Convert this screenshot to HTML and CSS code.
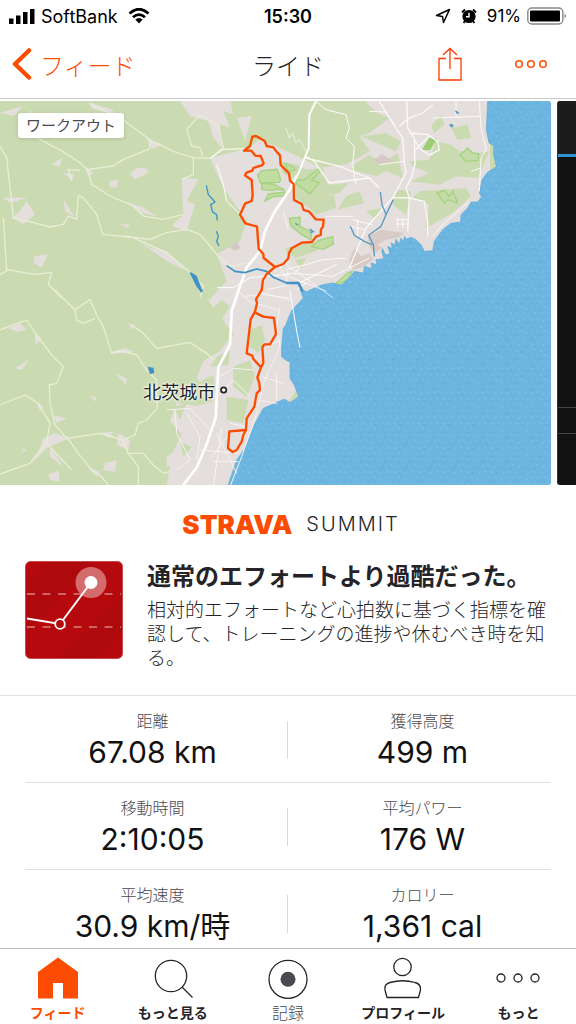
FILE: index.html
```html
<!DOCTYPE html>
<html lang="ja">
<head>
    <meta charset="UTF-8">
    <meta name="viewport" content="width=device-width, initial-scale=1.0">
    <title>ライド</title>
    <link rel="stylesheet" href="styles.css">
</head>
<body>
    <div class="status-bar">
        <div class="status-left">
            <svg width="26" height="16" viewBox="0 0 26 16"><path d="M0 10.500h4.500V16H0zM7 7.500h4.500V16H7zM14 4h4.500v12H14zM21 1h4.500v15H21z"/></svg>
            <span class="carrier">SoftBank</span>
            <svg class="wifi" width="22" height="16" viewBox="0 0 22 16"><path d="M1.500 5.500Q11-3 20.500 5.500M5 9.300Q11 4 17 9.300" fill="none" stroke="#000" stroke-width="2.800"/><path d="M7.300 11.600Q11 8.500 14.700 11.600L11 15.500z"/></svg>
        </div>
        <time class="clock">15:30</time>
        <div class="status-right">
            <svg width="16" height="16" viewBox="0 0 16 16"><path d="M1.500 7.500L14.500 1.500L8.500 14.500L7.500 8.500z" fill="none" stroke="#000" stroke-width="1.500" stroke-linejoin="round"/></svg>
            <svg class="alarm" width="16" height="16" viewBox="0 0 16 16"><circle cx="8" cy="8.500" r="6.600"/><path d="M1 4.500L4 1.500M15 4.500L12 1.500M4 13l-1.500 2M12 13l1.500 2" stroke="#000" stroke-width="1.800"/><path d="M8 4.800v4H5" fill="none" stroke="#fff" stroke-width="1.400"/></svg>
            <span>91%</span>
            <svg width="40" height="18" viewBox="0 0 40 18"><rect x=".8" y="1" width="35" height="16" rx="4" fill="none" stroke="#888" stroke-width="1.400"/><rect x="3" y="3.500" width="30" height="11" rx="1"/><path d="M37.500 6.500q3 2.500 0 5z" fill="#888"/></svg>
        </div>
    </div>

    <header class="nav-bar">
        <a class="back" href="#feed">
            <svg width="20" height="32" viewBox="0 0 20 32"><path d="M17 2.500L3 16L17 29.500" fill="none" stroke="#fc4c02" stroke-width="4.500" stroke-linecap="round" stroke-linejoin="round"/></svg>
            フィード
        </a>
        <h1>ライド</h1>
        <div class="nav-actions">
            <button type="button" aria-label="共有">
                <svg width="24" height="34" viewBox="0 0 24 34"><path d="M8 11.500H1V33H23V11.500H16M12 22V2M5 8L12 1.500L19 8" fill="none" stroke="#fc3a02" stroke-width="1.300"/></svg>
            </button>
            <button type="button" aria-label="メニュー">
                <svg width="34" height="10" viewBox="0 0 34 10" fill="none" stroke="#fc4c02" stroke-width="1.500"><circle cx="5" cy="5" r="3.300"/><circle cx="17" cy="5" r="3.300"/><circle cx="29" cy="5" r="3.300"/></svg>
            </button>
        </div>
    </header>

    <main>
        <section class="carousel">
            <div class="map">
                <svg class="map-art" viewBox="0 0 1653 1152">
                    <defs>
                        <pattern id="waves" width="73" height="73" patternUnits="userSpaceOnUse">
                            <rect width="73" height="73" fill="#6cb5e0"/>
                            <path d="M5 8l6 2M20 4l5 3M38 12l7-2M58 6l4 4M12 24l5 3M31 28l8 1M50 23l5 4M66 30l5-2M4 42l6 3M24 45l4-3M43 40l7 4M60 48l6 1M14 60l7 2M35 64l5-3M53 60l6 3M67 68l4-3" stroke="#85c7ec" stroke-width="2.500"/>
                            <path d="M14 15h8M46 32h9M27 54h10M4 69h6M62 16h6" stroke="#60acd9" stroke-width="3"/>
                        </pattern>
                    </defs>
                    <rect width="1653" height="1152" fill="#cbdbb1"/>

                    <!-- open land -->
                    <g fill="#e4dedc">
                        <path d="M1100 0L1470 0V550L1020 640L900 850L700 1152H500L520 1050L545 1000L510 960L530 905L590 915L640 900L590 830L610 780L660 750L700 700L625 600L680 540L650 460L720 420L740 360L670 260L630 170L745 142L780 115L880 160L960 200L1040 190L1110 150L1075 100z"/>
                        <path d="M540 0L690 0L700 40L670 30L690 80L660 70L665 140L640 110L625 60L570 45zM710 50L755 45L735 120z"/>
                        <path d="M390 220L410 200L440 202L445 215L405 235zM330 240L355 235L350 260L328 258zM155 190L185 170L180 195L195 200zM190 215L220 220L218 240zM190 295L225 350L195 330zM60 330L80 300L105 340L70 370L35 350zM105 465L145 460L125 500L100 485zM545 230L595 235L560 300L585 310L560 390L515 375L550 340zM255 195L280 215L265 230zM375 300L430 320L470 345L420 335zM440 115L490 130L455 145zM400 410L450 440L500 450L560 510L500 480zM265 3L335 25L345 40L280 25zM0 35L70 15L40 45zM360 370h30l-10 12zM10 290L85 290L30 305z"/>
                    </g>
                    <g transform="translate(0 567)" fill="#e4dedc">
                        <path d="M25 115L60 100L80 120L50 125zM45 235L90 205L65 240zM105 130L125 150L105 165zM345 250L380 265L378 285zM270 315L290 325L285 335zM160 375L200 385L170 400zM130 445L165 430L205 445L140 475L95 520L120 475zM150 470L190 530L150 500zM145 555L175 540L180 575L150 570zM355 430L390 450L385 480L350 465zM300 430l40-6-10 20zM265 535L300 545L290 560zM315 520L350 510L345 545L310 540zM385 100L405 105L395 120zM335 185L375 175L400 185L345 192zM70 475l10 5-15 10zM110 335L130 350L120 365zM500 500L530 480L560 530L500 530z"/>
                    </g>

                    <!-- woodland patches -->
                    <g transform="translate(858 -9)" fill="#cbdbb1">
                        <path d="M75 40L115 20L150 15L180 60L170 130L130 110L100 135L70 120zM195 35L235 10L275 45L310 60L250 105L190 125zM200 155L240 145L225 175L200 165zM210 195L250 170L290 195L335 165L350 240L300 220L270 235L195 215zM225 115L300 105L345 130L330 160zM435 85L465 50L475 80L445 105zM495 90L545 80L555 120L515 125zM450 130L495 140L520 160L580 165L610 160L575 240L510 235L460 260L375 250L430 225L380 205L370 190L430 185zM330 275L375 280L360 350L320 320zM400 280L540 270L555 295L500 345L420 390L430 320L380 300zM80 300L145 290L150 330L90 350L60 320zM180 295L220 280L235 315L155 335zM240 340L285 330L270 365zM0 450L80 430L100 455L30 480L0 465zM25 485L60 480L45 510z"/>
                        <path d="M-20 190L35 200L60 215L110 210L125 260L190 255L160 285L130 290L100 320L60 325L30 300L25 245L-10 225z"/>
                    </g>
                    <g transform="translate(0 567)" fill="#cbdbb1">
                        <path d="M625 65L665 30L690 50L650 110L620 100zM750 120L785 105L795 150L775 190L750 170zM700 230L750 210L765 260L740 320L700 290zM570 290L640 255L645 300L600 340zM680 320L745 330L730 400L680 390zM540 455L575 470L550 500zM520 350L560 340L540 390zM650 200L690 180L685 225L630 230z"/>
                    </g>

                    <!-- golf courses and parks -->
                    <g transform="translate(660 57)" fill="#c0dca0" stroke="#a5d283" stroke-width="4">
                        <path d="M113 165L125 152L172 148L182 178L178 187L120 188zM125 190L160 192L195 210L170 208L155 212L125 208zM145 222L195 216L190 228L160 230L135 243zM195 130L220 140L225 150L205 155zM228 180L255 178L298 145L300 155L275 180L298 188L270 222L228 190zM208 295L240 292L240 320L275 335L273 360L240 340L213 318zM275 380L295 362L338 350L340 372L310 388z"/>
                    </g>
                    <g transform="translate(858 -9)" fill="#c5dca8" stroke="#a5d283" stroke-width="4">
                        <path d="M522 172L545 150L560 165L578 168L577 187L540 190zM453 285L475 277L490 295L500 278L515 315L485 305L475 315zM145 560L185 525L198 520L185 545L150 563z"/>
                        <path d="M408 155L430 118L453 123L432 157z" fill="#9cce72" stroke="none"/>
                    </g>
                    <path d="M690 440L710 420L722 440L705 450zM1120 180L1145 160L1180 180L1150 190z" fill="#d5c8c7"/>

                    <!-- sea -->
                    <path transform="translate(858 -9)" fill="url(#waves)" stroke="#5aaadb" stroke-width="2" d="M605 5L601 95L609 135L624 143L622 165L631 207L605 222L588 245L580 285L587 297L575 312L556 312L545 330L525 350L524 372L495 376L470 395L445 430L440 458L415 460L405 440L390 425L375 418L360 424L356 415L352 432L345 420L340 438L330 424L326 442L316 434L318 452L305 444L312 468L298 470L290 452L287 460L294 482L270 485L272 500L255 495L258 512L235 505L232 525L205 520L190 540L165 562L140 555L110 560L85 570L62 581L45 575L37 553L48 590L52 600L18 636L5 666L0 680L-8 691L-13 746L-13 776L2 788L12 791L12 841L25 861L38 896L12 914L-5 903L-33 916L-68 931L-93 976L-123 1051L-148 1086L-180 1180H830V5z"/>
                    <g transform="translate(858 -9)" fill="#d8cac4">
                        <path d="M245 415L285 395L355 405L340 418L300 425L275 440L290 450L265 465L250 445zM205 450L190 485L200 515L225 510L262 485L250 465L225 475z"/>
                    </g>

                    <!-- minor roads -->
                    <g fill="none" stroke="#e8eed5" stroke-width="4" stroke-linejoin="round">
                        <path d="M0 135L20 170L30 260L40 350L100 365L150 378L190 370L205 345L230 355L235 285L250 290L290 340L308 400L400 410L500 455L560 505L610 555L600 590"/>
                        <path d="M90 30L120 115L185 150L240 185L265 210L275 250L330 285L400 315L430 345L490 355L550 340M265 205L340 195L370 175L445 145L455 120L360 50L270 10M455 120L530 155L580 170L630 172L670 140L655 75L600 42L560 85L575 135L600 140L608 165M215 240L205 205L240 208M580 170L580 220L545 235"/>
                        <path d="M10 350L20 510L0 520M20 505L100 520L155 515L145 550L185 591M370 405L450 415L500 395L560 385L600 400L630 435L650 460L680 490L700 495L750 485"/>
                    </g>
                    <g transform="translate(0 567)" fill="none" stroke="#e8eed5" stroke-width="4" stroke-linejoin="round">
                        <path d="M165 0L225 60L270 28L290 75L310 110L335 190L360 182L410 195L440 240L470 270L472 355L440 390L415 400L405 435L370 450L300 430L200 445L165 405L150 340L148 285L170 280L190 230L155 195L110 135L80 90L0 120M225 60L230 90L250 100L285 85M395 105L430 130L470 175L570 157L620 190L640 210M0 345L75 315L115 340L150 400L140 455L90 520L0 552M200 440L235 490L280 545L300 555L330 590M370 455L385 490L415 530L415 590M380 490L430 490L460 525L490 550L510 545M140 460L215 540"/>
                    </g>

                    <!-- main roads -->
                    <g transform="translate(858 -9)" fill="none" stroke="#fbf9f8" stroke-width="4" stroke-linejoin="round">
                        <path d="M60 175L85 190L130 255L250 240L280 270M60 180L160 205L250 240M280 10L330 90L350 120L355 195L360 225L320 300L240 390L190 510M362 10L365 90L385 120L387 200L375 240L360 270L370 300L365 400M320 298L370 300L415 310L425 370L425 415M340 85L370 60L410 45L440 20M370 105L425 110L455 130L460 155L430 172L400 150L385 125M385 158L430 115"/>
                        <path d="M90 10L120 35L180 50L190 90L180 120L205 145L200 200L210 260M250 40L300 42L330 90M280 200L355 190M120 355L200 355M200 365L260 380M195 385L235 395M215 365L215 415M330 365h35M330 378h35M335 360v30M350 360v30M580 10L585 90L600 155L585 180L580 280M440 60L580 55M510 60V10M440 415L470 380L550 310M585 210L555 220M0 515L60 500L110 485L180 480M0 525L140 535L190 510L250 480" stroke-width="3"/>
                        <path d="M90 10L70 50L68 150L40 220L20 260" stroke="#fff" stroke-width="6"/>
                        <path d="M0 90L10 120L20 105L30 135L40 125L60 160" stroke-width="2"/>
                    </g>
                    <g fill="none" stroke="#fff" stroke-linejoin="round">
                        <path d="M890 225L870 265L825 330L795 390L780 450L740 500L715 570L695 630L690 730L655 800L647 950L620 1030L590 1100L550 1152" stroke-width="8"/>
                        <path d="M630 172L670 145L745 143M650 190L670 250L680 300L720 340M650 560L700 560L750 530L870 520M880 520L900 500M890 550L1010 490M890 565L920 545M870 570L890 690L900 740" stroke-width="3"/>
                    </g>
                    <g transform="translate(0 567)" fill="none" stroke="#f6f3f1" stroke-width="3" stroke-linejoin="round">
                        <path d="M710 0L750 35L835 60M735 20L790 10L870 30M840 50L830 110L840 170L790 280L770 370L725 500L690 590M660 260L700 235L760 240M645 330L700 270L750 320M630 420L570 355L500 360M525 360L530 430L570 510L530 540M560 370L600 440L590 510M600 480L720 490M635 500L690 430M640 515H715M650 430L710 550M665 415L640 590M690 400L740 410M800 170L840 150M785 260L850 280M830 250L830 330M770 330L830 340"/>
                    </g>
                    <g transform="translate(0 -9)" fill="none" stroke="#fff" stroke-width="2">
                        <path d="M820 520L870 490M835 500L870 560M850 340L865 395M800 575L870 560M790 590L870 600M860 500L1000 600M850 530L980 580"/>
                    </g>

                    <!-- rivers and lakes -->
                    <g transform="translate(0 -9)" fill="none" stroke="#3f92c6" stroke-width="5" stroke-linejoin="round">
                        <path d="M619 262L625 290L645 312L632 320L638 342L650 350L652 367M649 400L655 415L650 430L657 444" stroke-width="4"/>
                        <path d="M680 503L705 520L735 524L770 513L800 520L820 538L860 555L895 555"/>
                        <path d="M858 555L895 555L908 580" stroke-width="8"/>
                        <path d="M572 525L588 535L605 580L592 565z" fill="#3f92c6"/>
                    </g>
                    <g transform="translate(858 -9)" fill="none" stroke="#5798c4" stroke-width="4">
                        <path d="M283 282L288 320L300 350L322 305M300 350L285 385L248 412L262 440L265 475M193 385L205 412L235 430L258 440"/>
                        <path d="M508 38l10 8-8-2M490 80l10 8M494 78l8 6M28 376l8 6M72 393l10 8-10 2"/>
                    </g>
                    <path d="M443 797L460 800L463 815L450 820zM598 562L610 567L602 575z" fill="#3f92c6"/>

                    <!-- ride route -->
                    <g fill="none" stroke="#fc4c02" stroke-width="7" stroke-linejoin="round" stroke-linecap="round">
                        <path transform="translate(660 57)" d="M165 441L131 414L130 402L116 386L111 320L76 310L60 284L76 250L95 243L98 225L95 180L75 166L79 158L97 152L100 144L125 136L131 130L122 108L106 107L94 92L72 92L90 78L97 50L108 48L134 63L140 78L160 82L172 98L180 106L182 135L207 160L210 182L221 192L222 240L245 252L251 270L268 275L287 298L311 299L309 320L303 328L302 345L288 350L276 366L245 368L215 385L207 400L205 415L190 432L165 441L140 462L129 480L125 510"/>
                        <path transform="translate(0 567)" d="M785 0L768 28L771 40L765 65L752 88L740 190L757 197L760 207L783 232M765 68L790 80L822 84L828 132L810 163L793 163L787 172L790 218L783 232L772 262L778 280L780 300L770 310L763 350L740 385L738 420L688 424L684 475L698 486L710 480L725 455L730 435L738 420"/>
                    </g>
                    <circle cx="671" cy="867" r="8" fill="#fff" stroke="#222" stroke-width="5"/>
                </svg>
                <span class="badge">ワークアウト</span>
                <span class="city">北茨城市</span>
            </div>
            <div class="next-card">
                <div class="next-top"></div>
                <div class="next-body"></div>
                <div class="next-row"></div>
                <div class="next-row"></div>
            </div>
        </section>

        <section class="summit">
            <div class="brand"><span class="strava">STRAVA</span><span class="tier">SUMMIT</span></div>
            <div class="effort">
                <svg class="effort-icon" width="98" height="98" viewBox="0 0 98 98">
                    <rect x=".5" y=".5" width="97" height="97" rx="5" fill="#b5090d" stroke="#c9494b"/>
                    <path d="M1 25L24 1H70L1 70zM35 97L97 35V70L70 97z" fill="#a50d11" opacity=".4"/>
                    <path d="M2 33H96M2 66H96" stroke="#d78384" stroke-width="1.500" stroke-dasharray="8 7.500"/>
                    <circle cx="66" cy="21.500" r="15.500" fill="#d46b6d"/>
                    <path d="M2 57.500L35 63L66 21.500" fill="none" stroke="#fff" stroke-width="2"/>
                    <circle cx="66" cy="21.500" r="6.500" fill="#fff"/>
                    <circle cx="35" cy="63" r="4.800" fill="#b5090d" stroke="#fff" stroke-width="1.800"/>
                </svg>
                <div class="effort-text">
                    <h2>通常のエフォートより過酷だった。</h2>
                    <p>相対的エフォートなど心拍数に基づく指標を確認して、トレーニングの進捗や休むべき時を知る。</p>
                </div>
            </div>
        </section>

        <dl class="stats">
            <div class="stat"><dt>距離</dt><dd>67.08 km</dd></div>
            <div class="stat"><dt>獲得高度</dt><dd>499 m</dd></div>
            <div class="stat"><dt>移動時間</dt><dd>2:10:05</dd></div>
            <div class="stat"><dt>平均パワー</dt><dd>176 W</dd></div>
            <div class="stat"><dt>平均速度</dt><dd>30.9 km/時</dd></div>
            <div class="stat"><dt>カロリー</dt><dd>1,361 cal</dd></div>
        </dl>
    </main>

    <nav class="tab-bar">
        <a class="tab active" href="#feed">
            <svg width="42" height="42" viewBox="0 0 42 42"><path d="M21 .500L41 15V41.500H26V26H16V41.500H1V15z" fill="#fc4c02"/></svg>
            フィード
        </a>
        <a class="tab" href="#explore">
            <svg width="42" height="42" viewBox="0 0 42 42" fill="none" stroke="#242428" stroke-width="1.300"><circle cx="19" cy="19" r="15.700"/><path d="M30 30L40.500 40.500"/></svg>
            もっと見る
        </a>
        <a class="tab record" href="#record">
            <svg width="42" height="42" viewBox="0 0 42 42"><circle cx="21" cy="22.300" r="19" fill="none" stroke="#242428" stroke-width="1.300"/><circle cx="21" cy="22.300" r="7.500" fill="#494950"/></svg>
            記録
        </a>
        <a class="tab" href="#profile">
            <svg width="42" height="42" viewBox="0 0 42 42" fill="none" stroke="#242428" stroke-width="1.300"><circle cx="20.500" cy="10" r="8.700"/><path d="M5 40.500L3 33Q2 27 8 25.500Q21 22 33 25.500Q39 27 38.500 33L36.500 40.500z" stroke-linejoin="round"/></svg>
            プロフィール
        </a>
        <a class="tab" href="#more">
            <svg width="44" height="42" viewBox="0 0 44 42" fill="none" stroke="#242428" stroke-width="1.300"><circle cx="5" cy="21" r="4"/><circle cx="22" cy="21" r="4"/><circle cx="39" cy="21" r="4"/></svg>
            もっと
        </a>
    </nav>
</body>
</html>
```
FILE: styles.css
```css
* {
    box-sizing: border-box;
}

body {
    margin: 0;
    height: 100vh;
    display: flex;
    flex-direction: column;
    overflow: hidden;
    font-family: Inter, "Noto Sans CJK JP", sans-serif;
    color: #242428;
    background-color: #fff;
}

svg {
    display: block;
    flex: none;
}

h1, h2, p, dl, dd {
    margin: 0;
}

a {
    color: inherit;
    text-decoration: none;
}

button {
    padding: 0;
    border: none;
    background: none;
    cursor: pointer;
}

/* Status bar */
.status-bar {
    display: grid;
    grid-template-columns: 1fr auto 1fr;
    align-items: center;
    height: 32px;
    padding: 0 9px;
    font-size: 17px;
    color: #000;
}

.status-left,
.status-right {
    display: flex;
    align-items: center;
    gap: 6px;
}

.status-right {
    justify-content: flex-end;
}

.carrier {
    font-size: 18px;
}

.wifi {
    margin-left: 4px;
}

.alarm {
    margin: 0 4px;
}

.clock {
    font-size: 18px;
    font-weight: 600;
}

/* Navigation bar */
.nav-bar {
    display: grid;
    grid-template-columns: 1fr auto 1fr;
    align-items: center;
    height: 67px;
    padding: 0 12px 2px;
    border-bottom: 1px solid #c8c7cc;
}

.nav-bar h1 {
    font-size: 24px;
    font-weight: 300;
}

.back {
    display: flex;
    align-items: center;
    gap: 8px;
    font-size: 24px;
    font-weight: 300;
    color: #fc4c02;
}

.nav-actions {
    display: flex;
    align-items: center;
    justify-content: flex-end;
    gap: 52px;
    padding-right: 16px;
}

main {
    flex: 1;
    min-height: 0;
    overflow: hidden;
}

/* Map and the edge of the next card */
.carousel {
    display: flex;
    gap: 6px;
    padding-top: 2px;
}

.map {
    flex: 1;
    position: relative;
}

.map-art {
    width: 100%;
    border-radius: 0 3px 3px 0;
}

.badge {
    position: absolute;
    top: 12px;
    left: 18px;
    padding: 0 8px;
    border-radius: 3px;
    font-size: 15px;
    line-height: 25px;
    color: #494950;
    background-color: #fff;
    box-shadow: 0 1px 4px rgba(0, 0, 0, 0.15);
}

.city {
    position: absolute;
    top: 76%;
    left: 26%;
    font-size: 18px;
    line-height: 1;
    color: #222;
    text-shadow: 0 0 3px #fff, 0 0 3px #fff, 0 0 2px #fff;
    transform: translateY(-50%);
}

.next-card {
    display: flex;
    flex-direction: column;
    width: 19px;
    border-left: 1px solid #333;
    border-radius: 3px 0 0 3px;
    overflow: hidden;
    background-color: #121212;
}

.next-top {
    height: 56px;
    border-bottom: 3px solid #2e93cf;
    background-color: #1c1c1c;
}

.next-body {
    flex: 1;
}

.next-row {
    height: 26px;
    border-top: 1px solid #444;
}

.next-row:last-child {
    height: 52px;
}

/* Summit */
.summit {
    padding: 24px 25px 24px;
    border-bottom: 1px solid #dfdfe3;
}

.brand {
    display: flex;
    align-items: center;
    justify-content: center;
    gap: 14px;
    height: 30px;
    padding-left: 6px;
}

.strava {
    font-size: 26px;
    font-weight: 900;
    color: #fc4c02;
}

.tier {
    font-size: 20px;
    font-weight: 300;
    letter-spacing: 2px;
}

.effort {
    display: flex;
    gap: 24px;
    padding-top: 22px;
}

.effort-text {
    flex: 1;
}

.effort h2 {
    font-size: 24px;
    font-weight: 700;
    line-height: 32px;
}

.effort p {
    padding-top: 6px;
    font-size: 19px;
    font-weight: 300;
    line-height: 24px;
}

/* Ride stats */
.stats {
    display: grid;
    grid-template-columns: 1fr 1fr;
    padding: 0 25px;
}

.stat {
    position: relative;
    height: 87px;
    padding-top: 13px;
    padding-left: 6px;
    border-bottom: 1px solid #dfdfe8;
    text-align: center;
}

.stat:nth-child(odd) {
    padding-left: 0;
    padding-right: 8px;
}

.stat:nth-child(odd)::after {
    content: "";
    position: absolute;
    top: 25px;
    right: 0;
    width: 1px;
    height: 38px;
    background-color: #d8d8de;
}

.stat dt {
    font-size: 16px;
    font-weight: 300;
    line-height: 24px;
    color: #494950;
}

.stat dd {
    font-size: 30px;
    line-height: 38px;
    color: #111;
}

/* Tab bar */
.tab-bar {
    display: flex;
    height: 76px;
    border-top: 1px solid #bbb;
    background-color: #fff;
}

.tab {
    flex: 1;
    display: flex;
    flex-direction: column;
    align-items: center;
    gap: 4px;
    padding-top: 8px;
    font-size: 14px;
    font-weight: 700;
    line-height: 20px;
    white-space: nowrap;
}

.tab.active {
    color: #fc4c02;
}

.tab.record {
    font-size: 16px;
    font-weight: 300;
    color: #494950;
}
```
